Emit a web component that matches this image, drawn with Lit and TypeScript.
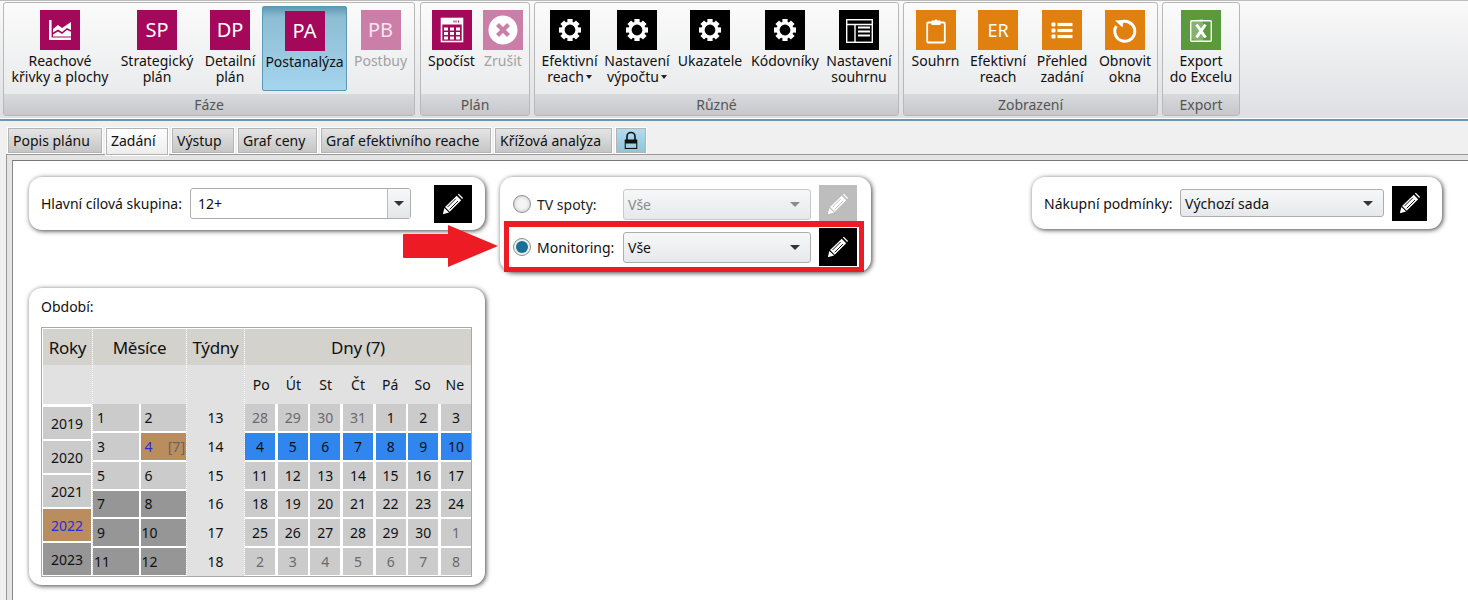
import { LitElement, html, svg, css, nothing } from 'lit';
import { customElement } from 'lit/decorators.js';

const gear = svg`<g fill="#fff" transform="translate(20 20)">
  ${[0, 45, 90, 135, 180, 225, 270, 315].map((a) => svg`<rect x="-2.6" y="-11" width="5.2" height="4.5" transform="rotate(${a})"/>`)}
  <circle r="7" fill="none" stroke="#fff" stroke-width="3.2"/>
</g>`;

const icons: Record<string, unknown> = {
  chart: svg`<path d="M10.3 10v18.7H31" fill="none" stroke="#fff" stroke-width="2.6"/>
    <path fill="#fff" d="M13 26.5V19l5-4 4 3 9-6v14.5z"/>
    <path d="M13 23.5l5-3 4 2.5 5-4 4 2" fill="none" stroke="#a3085a" stroke-width="1.5"/>`,
  calc: svg`<g fill="none" stroke="#fff" stroke-width="1.6"><rect x="9.5" y="8.5" width="21" height="23"/></g>
    <rect x="10" y="9" width="20" height="5.5" fill="#fff"/>
    <path d="M24 10.5v2M26.5 10.5v2M22 10.5v2" stroke="#a3085a"/>
    ${[12, 18, 24].flatMap((x) => [17.5, 22, 26.5].map((y) => svg`<rect x=${x} y=${y} width="4" height="3" fill="#fff"/>`))}`,
  cancel: svg`<circle cx="20" cy="20" r="14.5" fill="#fff"/>
    <path d="M14.5 14.5l11 11M25.5 14.5l-11 11" stroke="#cb7fa8" stroke-width="4.2"/>`,
  gear,
  layout: svg`<g fill="none" stroke="#fff" stroke-width="1.4"><rect x="7.7" y="9.7" width="25.6" height="22.6"/>
    <path d="M8 14.5h25M16 14.5v17.5"/></g>
    <rect x="19" y="16.5" width="12" height="2" fill="#fff"/><rect x="19" y="20.5" width="12" height="2" fill="#fff"/>
    <rect x="19" y="24.5" width="12" height="2" fill="#fff"/>`,
  clip: svg`<rect x="11.2" y="12.5" width="17.6" height="20" rx="1" fill="none" stroke="#fff" stroke-width="1.8"/>
    <path fill="#fff" d="M15.5 10.5h3a1.6 1.6 0 0 1 3 0h3v4.5h-9z"/>`,
  list: svg`<g fill="#fff">${[12.5, 18.5, 24.5].map((y) => svg`<rect x="9.5" y=${y} width="4" height="4" rx="1"/><rect x="15.5" y=${y + 0.4} width="15" height="3.2"/>`)}</g>`,
  refresh: svg`<path d="M15 12.5A10 10 0 1 1 11.3 16" fill="none" stroke="#fff" stroke-width="3"/>
    <path fill="#fff" d="M10 10.5l8.5-.5-1 7.5z"/>`,
  excel: svg`<path fill="#fff" d="M10 11l12-2.5v23L10 29z" opacity=".25"/>
    <g fill="none" stroke="#fff" stroke-width="1.4"><rect x="9.7" y="10.7" width="20.6" height="20.6" rx="1"/></g>
    <path d="M15.5 14.5l9 13M24.5 14.5l-9 13" stroke="#fff" stroke-width="3"/>`,
};

const pencil = svg`<svg viewBox="0 0 24 24" width="24" height="24"><g fill="#fff">
  <path d="M16.8 2.6l1-.8 4.3 4.3-.9 1z"/><path d="M15.7 3.7l4.5 4.5-11.5 11.5-4.6-4.6z"/><path d="M3.4 15.9l4.7 4.7-6.3 1.6z"/></g>
  <path d="M14.8 6.8L6.5 15.1M17 9L8.7 17.3" stroke="currentColor" stroke-width=".9"/></svg>`;

type Item = { w: number; label: string[]; color: string; text?: string; icon?: string; off?: boolean; on?: boolean; caret?: number };
type Group = { title: string; w: number; items: Item[] };

const P = '#a3085a';
const PF = '#cb7fa8';
const O = '#e0800f';

const groups: Group[] = [
  { title: 'Fáze', w: 412, items: [
    { w: 112, label: ['Reachové', 'křivky a plochy'], color: P, icon: 'chart' },
    { w: 82, label: ['Strategický', 'plán'], color: P, text: 'SP' },
    { w: 64, label: ['Detailní', 'plán'], color: P, text: 'DP' },
    { w: 85, label: ['Postanalýza'], color: P, text: 'PA', on: true },
    { w: 67, label: ['Postbuy'], color: PF, text: 'PB', off: true },
  ] },
  { title: 'Plán', w: 110, items: [
    { w: 61, label: ['Spočíst'], color: P, icon: 'calc' },
    { w: 42, label: ['Zrušit'], color: PF, icon: 'cancel', off: true },
  ] },
  { title: 'Různé', w: 365, items: [
    { w: 69, label: ['Efektivní', 'reach'], color: '#000', icon: 'gear', caret: 1 },
    { w: 66, label: ['Nastavení', 'výpočtu'], color: '#000', icon: 'gear', caret: 1 },
    { w: 80, label: ['Ukazatele'], color: '#000', icon: 'gear' },
    { w: 70, label: ['Kódovníky'], color: '#000', icon: 'gear' },
    { w: 78, label: ['Nastavení', 'souhrnu'], color: '#000', icon: 'layout' },
  ] },
  { title: 'Zobrazení', w: 255, items: [
    { w: 63, label: ['Souhrn'], color: O, icon: 'clip' },
    { w: 62, label: ['Efektivní', 'reach'], color: O, text: 'ER' },
    { w: 66, label: ['Přehled', 'zadání'], color: O, icon: 'list' },
    { w: 60, label: ['Obnovit', 'okna'], color: O, icon: 'refresh' },
  ] },
  { title: 'Export', w: 78, items: [
    { w: 76, label: ['Export', 'do Excelu'], color: '#5b9a3c', icon: 'excel' },
  ] },
];

const tabs = [
  { label: 'Popis plánu', w: 96 },
  { label: 'Zadání', w: 64, active: true },
  { label: 'Výstup', w: 64 },
  { label: 'Graf ceny', w: 81 },
  { label: 'Graf efektivního reache', w: 172 },
  { label: 'Křížová analýza', w: 119 },
];

const months = [
  { n: 1 }, { n: 2 }, { n: 3 }, { n: 4, sel: true }, { n: 5 }, { n: 6 },
  { n: 7, dark: true }, { n: 8, dark: true }, { n: 9, dark: true }, { n: 10, dark: true },
  { n: 11, dark: true }, { n: 12, dark: true },
];

const years = [
  { y: 2019 }, { y: 2020 }, { y: 2021 }, { y: 2022, sel: true }, { y: 2023, dark: true },
];

const dayNames = ['Po', 'Út', 'St', 'Čt', 'Pá', 'So', 'Ne'];

const days: { d: number; out?: boolean; week?: boolean }[] = [
  ...[28, 29, 30, 31].map((d) => ({ d, out: true })),
  ...[1, 2, 3].map((d) => ({ d })),
  ...[4, 5, 6, 7, 8, 9, 10].map((d) => ({ d, week: true })),
  ...Array.from({ length: 20 }, (_, i) => ({ d: i + 11 })),
  ...[1, 2, 3, 4, 5, 6, 7, 8].map((d) => ({ d, out: true })),
];

@customElement('app-root')
export class AppRoot extends LitElement {
  static styles = css`
    :host {
      display: block;
      height: 600px;
      font: 14px 'Noto Sans', 'Open Sans', sans-serif;
      color: #111;
      background: #f0f0f0;
      overflow: hidden;
    }
    .ribbon {
      display: flex;
      gap: 4px;
      height: 119px;
      box-sizing: border-box;
      padding: 1px 0 2px 3px;
      background: linear-gradient(#fafafa, #dedfe3);
      border-top: 1px solid #bcbcbc;
      border-bottom: 1px solid #fff;
    }
    .group {
      box-sizing: border-box;
      display: flex;
      flex-direction: column;
      border: 1px solid #b8b8b8;
      border-radius: 3px;
      background: linear-gradient(#fbfbfb, #e6e7e9);
    }
    .group:first-child { margin-right: 1px; }
    .items { display: flex; flex: 1; }
    .item {
      box-sizing: border-box;
      display: flex;
      flex-direction: column;
      align-items: center;
      height: 86px;
      padding-top: 7px;
      line-height: 16px;
      text-align: center;
      white-space: nowrap;
    }
    .item.on {
      margin-top: 3px;
      height: 85px;
      padding-top: 4px;
      border: 1px solid #5b9ab5;
      border-radius: 2px;
      background: linear-gradient(#5f98b3, #8dbdd3 12%, #a5d4ee);
    }
    .item.off { color: #a2a2a2; }
    .tile {
      position: relative;
      display: flex;
      align-items: center;
      justify-content: center;
      width: 40px;
      height: 40px;
      margin-bottom: 3px;
      flex: none;
      color: #fff;
      font-size: 20px;
    }
    .tile.small { font-size: 18px; }
    .tile svg { display: block; }
    .off .tile { color: #f5e4ee; }
    .caret {
      display: inline-block;
      margin-left: 2px;
      vertical-align: 3px;
      border: 3px solid transparent;
      border-top: 4px solid #222;
      border-bottom: 0;
    }
    .foot {
      height: 21px;
      line-height: 22px;
      text-align: center;
      color: #555;
      background: linear-gradient(#d8dade, #c5c7cb);
    }
    .rule { height: 2px; background: #6e93b3; }
    .tabs {
      display: flex;
      gap: 2px;
      height: 33px;
      box-sizing: border-box;
      padding: 6px 0 0 7px;
      background: #f0f0f0;
    }
    .tab {
      box-sizing: border-box;
      height: 27px;
      padding: 3px 0 0 5px;
      border: 1px solid #fff;
      outline: 1px solid #b4b4b4;
      outline-offset: -2px;
      background: linear-gradient(#e6e6e6, #c4c4c4);
      white-space: nowrap;
    }
    .tab.active {
      height: 29px;
      margin-bottom: -2px;
      background: linear-gradient(#ffffff, #ececec);
      position: relative;
    }
    .tab.lock {
      width: 32px;
      padding: 2px 0 0;
      display: flex;
      justify-content: center;
      background: linear-gradient(#b5dcef, #8fc3dc);
    }
    .frame {
      height: 446px;
      box-sizing: border-box;
      margin-left: 6px;
      padding: 5px 0 0 5px;
      border-left: 1px solid #999;
      border-top: 1px solid #999;
      background: #e4e4e4;
    }
    .content {
      position: relative;
      display: flex;
      align-items: flex-start;
      height: 100%;
      box-sizing: border-box;
      padding: 16px 26px 0 16px;
      background: #fff;
      border-left: 1px solid #8a8a8a;
      border-top: 1px solid #777;
    }
    .left { display: flex; flex-direction: column; gap: 58px; width: 456px; flex: none; }
    .card {
      box-sizing: border-box;
      background: #fff;
      border-radius: 13px;
      box-shadow: 1px 1px 5px rgba(0, 0, 0, 0.75);
    }
    .row { display: flex; align-items: center; }
    .main { height: 53px; padding: 0 12px; }
    .main label { width: 149px; }
    .main .combo { width: 221px; }
    .main .pen { margin-left: 23px; }
    .source {
      position: relative;
      display: flex;
      flex-direction: column;
      gap: 5px;
      width: 371px;
      height: 95px;
      margin-left: 15px;
      padding: 8px 0 0 13px;
      flex: none;
    }
    .source label { width: 86px; }
    .source .combo { width: 188px; }
    .source .pen { margin-left: 8px; }
    .source .dim { color: #222; }
    .radio {
      box-sizing: border-box;
      display: flex;
      align-items: center;
      justify-content: center;
      width: 18px;
      height: 18px;
      margin-right: 6px;
      border: 1px solid #8f8f8f;
      border-radius: 50%;
      background: radial-gradient(#f4f4f4 40%, #c4c4c4);
      flex: none;
    }
    .radio.on { background: #e8eef2; }
    .radio.on::after {
      content: '';
      width: 12px;
      height: 12px;
      border-radius: 50%;
      background: #1a6f94;
    }
    .combo {
      box-sizing: border-box;
      display: flex;
      align-items: center;
      height: 31px;
      padding-left: 4px;
      border: 1px solid #adadad;
      border-radius: 3px;
      background: linear-gradient(#f6f7f8, #e6e9ec);
      flex: none;
    }
    .combo > span:first-child { flex: 1; }
    .combo.off { border-color: #c6c8ca; color: #8a8a8a; }
    .combo.off .arrow { border-top-color: #8c8c8c; }
    .arrow {
      width: 0;
      margin-right: 10px;
      border: 5px solid transparent;
      border-top: 5px solid #333;
      border-bottom: 0;
    }
    .combo.plain { background: #fff; padding-left: 7px; }
    .combo.plain .drop {
      display: flex;
      align-items: center;
      justify-content: center;
      align-self: stretch;
      width: 22px;
      border-left: 1px solid #bbb;
      background: linear-gradient(#f7f8f9, #e4e7ea);
      border-radius: 0 2px 2px 0;
    }
    .combo.plain .arrow { margin: 0; }
    .pen {
      display: flex;
      align-items: center;
      justify-content: center;
      width: 38px;
      height: 38px;
      background: #000;
      color: #000;
      flex: none;
    }
    .pen.off { background: #bdbdbd; color: #bdbdbd; }
    .buy { height: 52px; padding: 0 14px 0 12px; margin-left: auto; width: 410px; }
    .buy label { width: 136px; }
    .buy .combo { width: 204px; height: 28px; }
    .buy .pen { width: 35px; height: 35px; margin-left: 8px; }
    .period { height: 297px; padding: 9px 12px 0; }
    .period > div:first-child { height: 30px; }
    .cal {
      display: flex;
      height: 250px;
      box-sizing: border-box;
      margin-right: 1px;
      border: 1px solid #a8a8a8;
      padding: 1px 0 0 1px;
      background: #fff;
    }
    .col {
      display: flex;
      flex-direction: column;
      border-right: 1px dotted #fff;
      background: #e1e1e1;
    }
    .col:last-child { border-right: 0; flex: 1; }
    .years { width: 49px; }
    .months { width: 93px; }
    .weeks { width: 57px; }
    .head {
      height: 36px;
      line-height: 38px;
      text-align: center;
      background: #d3d2cd;
      font-size: 17px;
      letter-spacing: -0.3px;
      flex: none;
    }
    .sub { height: 38px; flex: none; }
    .days .sub {
      display: grid;
      grid-template-columns: repeat(7, 1fr);
      align-items: center;
      text-align: center;
    }
    .body {
      display: grid;
      flex: 1;
      gap: 2px;
      margin-top: 1px;
      background: #fff;
    }
    .body div { display: flex; align-items: center; justify-content: center; background: #cbcbcb; overflow: hidden; }
    .years .body {
      grid-template-rows: repeat(5, 1fr);
      padding: 3px 1px 1px 0;
    }
    .months .body { grid-template-columns: 1fr 1fr; grid-template-rows: repeat(6, 1fr); padding-bottom: 1px; }
    .months .body div { justify-content: flex-start; padding-left: 4px; }
    .months .body div.tight { padding-left: 1px; }
    .weeks .body { grid-template-rows: repeat(6, 1fr); background: #e1e1e1; padding-bottom: 1px; }
    .weeks .body div { background: #e1e1e1; }
    .days .body { grid-template-columns: repeat(7, 1fr); grid-template-rows: repeat(6, 1fr); gap: 2px 2.5px; padding-bottom: 1px; }
    .body div.dark { background: #969696; }
    .body div.sel { background: #b98d5e; color: #2b2be0; }
    .body div.sel small { margin-left: auto; margin-right: 1px; font-size: 14px; color: #666; }
    .body div.out { color: #6a6a6a; }
    .body div.week { background: #3085ee; }
    .red {
      position: absolute;
      left: 4px;
      top: 44px;
      width: 360px;
      height: 51px;
      box-sizing: border-box;
      border: 5px solid #ed1c24;
      border-top-width: 6px;
      pointer-events: none;
    }
    .pointer { position: absolute; left: 390px; top: 64px; }
  `;

  private tile(it: Item) {
    return html`<div class="tile ${it.text === 'ER' ? 'small' : ''}" style="background:${it.color}">
      ${it.text ?? html`<svg viewBox="0 0 40 40" width="40" height="40">${icons[it.icon!]}</svg>`}
    </div>`;
  }

  private item(it: Item) {
    return html`<div class="item ${it.on ? 'on' : ''} ${it.off ? 'off' : ''}" style="width:${it.w}px">
      ${this.tile(it)}
      ${it.label.map((l, i) => html`<div>${l}${it.caret && i === 1 ? html`<span class="caret"></span>` : nothing}</div>`)}
    </div>`;
  }

  private pen(off = false) {
    return html`<div class="pen ${off ? 'off' : ''}">${pencil}</div>`;
  }

  private combo(text: string, off = false) {
    return html`<div class="combo ${off ? 'off' : ''}"><span>${text}</span><span class="arrow"></span></div>`;
  }

  render() {
    return html`
      <div class="ribbon">
        ${groups.map((g) => html`
          <div class="group" style="width:${g.w}px">
            <div class="items">${g.items.map((it) => this.item(it))}</div>
            <div class="foot">${g.title}</div>
          </div>`)}
      </div>
      <div class="rule"></div>
      <div class="tabs">
        ${tabs.map((t) => html`<div class="tab ${t.active ? 'active' : ''}" style="width:${t.w}px">${t.label}</div>`)}
        <div class="tab lock">
          <svg viewBox="0 0 16 20" width="16" height="20">
            <path d="M4 10V6.5a4 4 0 0 1 8 0V10" fill="none" stroke="#111" stroke-width="1.6"/>
            <rect x="1.7" y="9.5" width="12.6" height="9.5" fill="#111"/>
            <rect x="2.8" y="13.5" width="10.4" height="4.4" fill="#9fd0e8"/>
          </svg>
        </div>
      </div>
      <div class="frame">
        <div class="content">
          <div class="left">
            <div class="card row main">
              <label>Hlavní cílová skupina:</label>
              <div class="combo plain"><span>12+</span><span class="drop"><span class="arrow"></span></span></div>
              ${this.pen()}
            </div>
            <div class="card period">
              <div>Období:</div>
              <div class="cal">
                <div class="col years">
                  <div class="head">Roky</div>
                  <div class="sub"></div>
                  <div class="body">
                    ${years.map((y) => html`<div class="${y.sel ? 'sel' : ''} ${y.dark ? 'dark' : ''}">${y.y}</div>`)}
                  </div>
                </div>
                <div class="col months">
                  <div class="head">Měsíce</div>
                  <div class="sub"></div>
                  <div class="body">
                    ${months.map((m) => html`<div class="${m.sel ? 'sel' : ''} ${m.dark ? 'dark' : ''} ${m.n > 9 ? 'tight' : ''}">
                      ${m.n}${m.sel ? html`<small>[7]</small>` : nothing}</div>`)}
                  </div>
                </div>
                <div class="col weeks">
                  <div class="head">Týdny</div>
                  <div class="sub"></div>
                  <div class="body">
                    ${[13, 14, 15, 16, 17, 18].map((w) => html`<div>${w}</div>`)}
                  </div>
                </div>
                <div class="col days">
                  <div class="head">Dny (7)</div>
                  <div class="sub">${dayNames.map((d) => html`<span>${d}</span>`)}</div>
                  <div class="body">
                    ${days.map((d) => html`<div class="${d.out ? 'out' : ''} ${d.week ? 'week' : ''}">${d.d}</div>`)}
                  </div>
                </div>
              </div>
            </div>
          </div>
          <div class="card source">
            <div class="row">
              <span class="radio"></span><label class="dim">TV spoty:</label>
              ${this.combo('Vše', true)}
              ${this.pen(true)}
            </div>
            <div class="row">
              <span class="radio on"></span><label>Monitoring:</label>
              ${this.combo('Vše')}
              ${this.pen()}
            </div>
            <div class="red"></div>
          </div>
          <div class="card row buy">
            <label>Nákupní podmínky:</label>
            ${this.combo('Výchozí sada')}
            ${this.pen()}
          </div>
          <svg class="pointer" viewBox="0 0 95 42" width="95" height="42">
            <path fill="#ed1c24" d="M1 9h44V0l50 21-50 21V33H1a1 1 0 0 1-1-1V10a1 1 0 0 1 1-1z"/>
          </svg>
        </div>
      </div>
    `;
  }
}
